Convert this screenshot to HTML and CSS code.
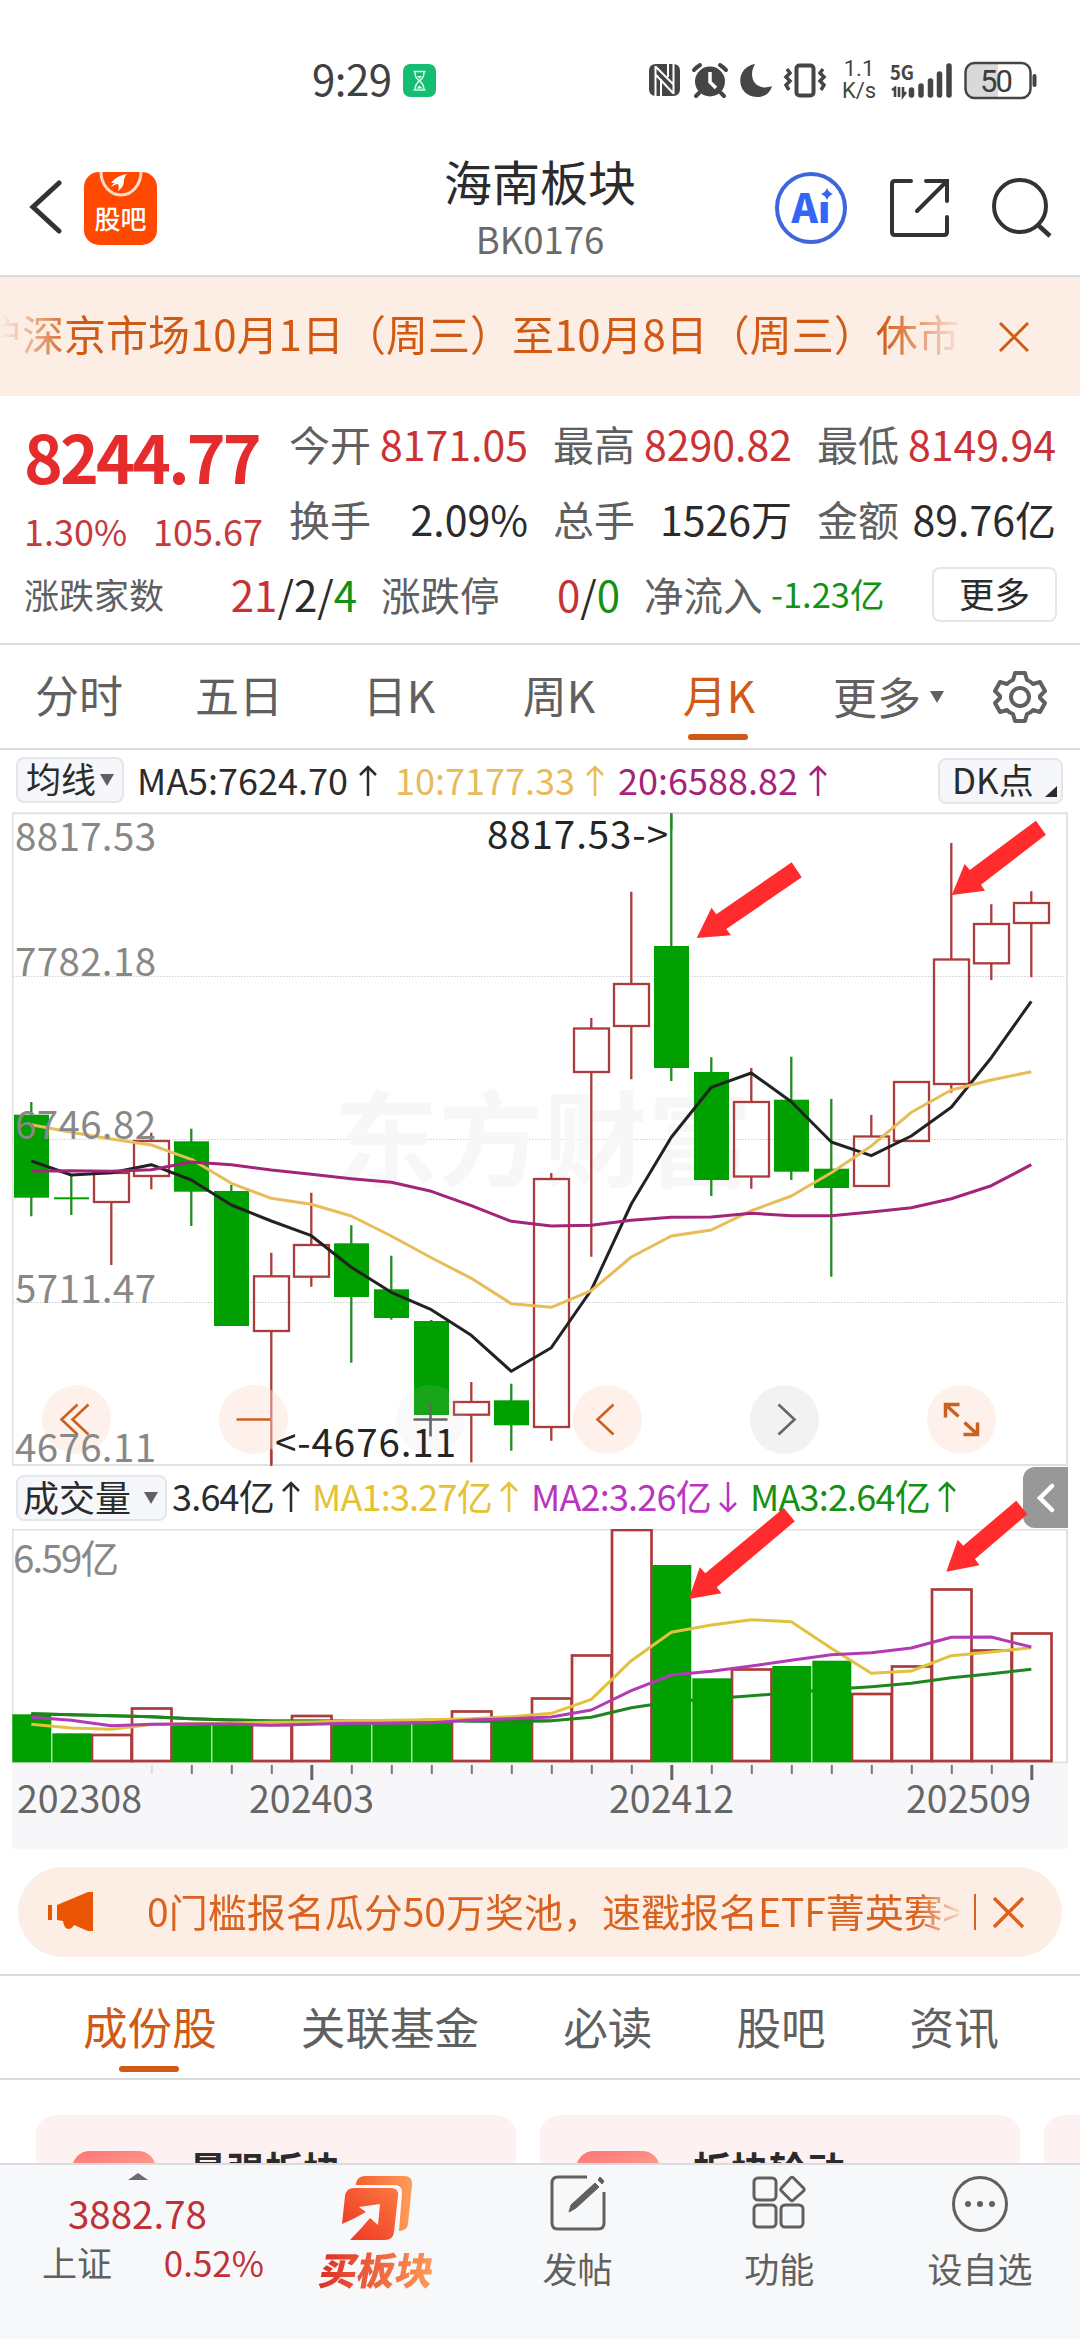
FILE: index.html
```html
<!DOCTYPE html>
<html lang="zh-CN">
<head>
    <meta charset="UTF-8">
    <meta name="viewport" content="width=device-width, initial-scale=1.0">
    <title>海南板块 BK0176</title>
    <link rel="stylesheet" href="styles.css">
</head>
<body>

    <div class="status-bar">
        <span class="clock">9:29</span>
        <svg class="timer-badge" width="33" height="33" viewBox="0 0 33 33">
            <rect width="33" height="33" rx="7" fill="#13bd71"/>
            <path d="M10.500 7.500h12M10.500 26h12M12 8c0 4.500 1 6 4.500 8.800C13 19.500 12 21.500 12 26M21 8c0 4.500-1 6-4.500 8.800C20 19.500 21 21.500 21 26" fill="none" stroke="#d8f8e8" stroke-width="1.500"/>
            <path d="M14 12h5l-2.500 2.500zM13.500 24.500l3-3 3 3z" fill="#fff"/>
        </svg>
        <div class="status-icons">
            <svg width="184" height="40" viewBox="644 60 184 40" fill="#454545">
                <path d="M655 64h17q7 0 7 7v18q0 7-7 7h-17q-7 0-7-7V71q0-7 7-7z"/>
                <path d="M654.500 96V66M672.500 94V64M655 67l17 17M655 75l17 18M660 79v17M667 64v13" stroke="#fff" stroke-width="2" fill="none"/>
                <circle cx="709" cy="81.500" r="15"/>
                <path d="M693 70q3-3 6-5M725 70q-3-3-6-5M698 93l-3 3M720 93l3 3" stroke="#454545" stroke-width="4" fill="none" stroke-linecap="round"/>
                <path d="M709 72v10l6 6" stroke="#fff" stroke-width="3.500" fill="none"/>
                <path d="M754 64c-20 3-20 32 2 33 8 0 13-4 15-11-16 6-25-8-17-22z"/>
                <rect x="795.500" y="65.500" width="17" height="30" rx="3" fill="none" stroke="#454545" stroke-width="4"/>
                <path d="M786 69l3 4-4 4 4 4-4 4 3 5M822 69l-3 4 4 4-4 4 4 4-3 5" fill="none" stroke="#454545" stroke-width="3.500"/>
            </svg>
            <div class="net-speed"><span>1.1</span><span>K/s</span></div>
            <svg width="65" height="40" viewBox="888 60 65 40" fill="#454545">
                <text x="889" y="80" font-size="20" font-weight="700" textLength="24" lengthAdjust="spacingAndGlyphs">5G</text>
                <path d="M891 90l3-2v9M898 87v10M902 87v9l3-4" fill="none" stroke="#454545" stroke-width="2.600"/>
                <path d="M910.500 90v5M920 86v9M929.500 81v14M938.500 74v21M948 66v29" stroke="#454545" stroke-width="5.500" stroke-linecap="round"/>
            </svg>
            <svg width="76" height="40" viewBox="962 60 76 40">
                <path d="M973 64h24v33h-24q-8 0-8-8V72q0-8 8-8z" fill="#d9d9d9"/>
                <rect x="964.500" y="63" width="65" height="35" rx="9" fill="none" stroke="#454545" stroke-width="2.500"/>
                <path d="M1033.500 76v9" stroke="#454545" stroke-width="4" stroke-linecap="round"/>
                <text class="battery-text" x="979" y="92" textLength="33">50</text>
            </svg>
        </div>
    </div>

    <header class="header">
        <svg class="back" width="34" height="56" viewBox="0 0 34 56"><path d="M31 4L5 28l26 24" fill="none" stroke="#333" stroke-width="5" stroke-linecap="round"/></svg>
        <div class="guba">
            <svg width="44" height="26" viewBox="0 0 44 26"><path d="M2 0a20 23 0 0 0 40 0" fill="none" stroke="#ffd9c9" stroke-width="3"/><path d="M12 11c4-5 9-8 16-9-2 2-3 4-3 7 0 4-2 7-6 10 1-3 1-5 0-7-2 0-4 1-7 3 1-2 2-3 4-4z" fill="#fff"/></svg>
            <span>股吧</span>
        </div>
        <div class="title">
            <div class="title-name">海南板块</div>
            <div class="title-code">BK0176</div>
        </div>
        <div class="header-icons">
            <div class="ai">Ai<svg class="ai-star" width="16" height="16" viewBox="0 0 16 16"><rect width="16" height="16" fill="#fff"/><path d="M8 2q1.500 4.500 6 6-4.500 1.500-6 6-1.500-4.500-6-6 4.500-1.500 6-6z" fill="#3565f6"/></svg></div>
            <svg width="60" height="60" viewBox="0 0 60 60" fill="none" stroke="#333" stroke-width="4" stroke-linecap="round"><path d="M22 3H6q-3 0-3 3v48q0 3 3 3h49q3 0 3-3V39M37 3h21v20M57 4L28 33"/></svg>
            <svg width="62" height="62" viewBox="0 0 62 62" fill="none" stroke="#333" stroke-width="4"><circle cx="29" cy="29" r="26"/><path d="M47 48l12 11" stroke-width="4.500"/></svg>
        </div>
    </header>

    <div class="notice">
        <div class="notice-text">沪深京市场10月1日（周三）至10月8日（周三）休市</div>
        <svg width="30" height="30" viewBox="0 0 30 30"><path d="M1 1l28 28M29 1L1 29" stroke="#d05a14" stroke-width="3"/></svg>
    </div>

    <section class="quote">
        <div class="quote-main">
            <div class="last-price">8244.77</div>
            <div class="change"><span>1.30%</span><span>105.67</span></div>
        </div>
        <div class="quote-grid">
            <div class="cell"><span>今开</span><b class="up">8171.05</b></div>
            <div class="cell"><span>最高</span><b class="up">8290.82</b></div>
            <div class="cell"><span>最低</span><b class="up">8149.94</b></div>
            <div class="cell"><span>换手</span><b>2.09%</b></div>
            <div class="cell"><span>总手</span><b>1526万</b></div>
            <div class="cell"><span>金额</span><b>89.76亿</b></div>
        </div>
        <div class="quote-extra">
            <span class="small">涨跌家数</span>
            <span class="count"><i class="up">21</i>/2/<i class="down">4</i></span>
            <span class="label">涨跌停</span>
            <span class="count"><i class="up">0</i>/<i class="down">0</i></span>
            <span class="label">净流入</span>
            <span class="flow">-1.23亿</span>
            <button class="more-btn">更多</button>
        </div>
    </section>

    <nav class="period-tabs">
        <span>分时</span>
        <span>五日</span>
        <span>日K</span>
        <span>周K</span>
        <span class="active">月K</span>
        <span class="more">更多<i class="tri"></i></span>
        <svg width="54" height="54" viewBox="-27 -27 54 54" fill="none" stroke="#606060" stroke-width="4" stroke-linejoin="round">
            <path d="M-5-24H5L7-17Q11-15.500 13-13L20-15 25-6 20-1V1L25 6 20 15 13 13Q11 15.500 7 17L5 24H-5L-7 17Q-11 15.500-13 13L-20 15-25 6-20 1V-1L-25-6-20-15-13-13Q-11-15.500-7-17Z"/>
            <circle r="9"/>
        </svg>
    </nav>

    <section class="chart">
        <div class="legend ma-legend">
            <button class="pick">均线<i class="tri"></i></button>
            <span class="ma5">MA5:7624.70<svg class="arr" viewBox="0 0 18 32"><path d="M9 31V2M1 10l8-8 8 8"/></svg></span>
            <span class="ma10">10:7177.33<svg class="arr" viewBox="0 0 18 32"><path d="M9 31V2M1 10l8-8 8 8"/></svg></span>
            <span class="ma20">20:6588.82<svg class="arr" viewBox="0 0 18 32"><path d="M9 31V2M1 10l8-8 8 8"/></svg></span>
            <button class="pick dk">DK点<i class="corner"></i></button>
        </div>

        <svg class="price" id="priceChart" width="1056" height="654" viewBox="12 812 1056 654"></svg>

        <div class="legend vol-legend">
            <button class="pick">成交量<i class="tri"></i></button>
            <span class="v0">3.64亿<svg class="arr" viewBox="0 0 18 32"><path d="M9 31V2M1 10l8-8 8 8"/></svg></span>
            <span class="v1">MA1:3.27亿<svg class="arr" viewBox="0 0 18 32"><path d="M9 31V2M1 10l8-8 8 8"/></svg></span>
            <span class="v2">MA2:3.26亿<svg class="arr" viewBox="0 0 18 32"><path d="M9 1v29M1 22l8 8 8-8"/></svg></span>
            <span class="v3">MA3:2.64亿<svg class="arr" viewBox="0 0 18 32"><path d="M9 31V2M1 10l8-8 8 8"/></svg></span>
            <div class="drawer"><svg width="18" height="30" viewBox="0 0 18 30"><path d="M15 3L3 15l12 12" fill="none" stroke="#fff" stroke-width="4.500" stroke-linecap="round"/></svg></div>
        </div>

        <svg class="volume" id="volumeChart" width="1056" height="320" viewBox="12 1529 1056 320"></svg>

        <!-- hand drawn marks over both charts -->
        <svg class="marks" width="1080" height="1100" viewBox="0 750 1080 1100" fill="#ff2b2c">
            <path d="M696.700 938L711.500 907.700 716.300 914.300 791.700 862.300 801.700 877.300 726.300 929 731 935.300Z"/>
            <path d="M951.800 895L964.600 864 969.800 870 1035.900 820.700 1045.900 834.700 981 884.700 985 890.700Z"/>
            <path d="M688.800 1599L699.800 1567.300 705.300 1573.300 783.800 1508 794.800 1521.300 716.700 1587.300 721.500 1593.300Z"/>
            <path d="M946.300 1571.700L957.700 1539.700 963.200 1545.700 1016.200 1500.700 1027.300 1514.300 975 1559 979.400 1565.300Z"/>
        </svg>
    </section>

    <div class="promo">
        <svg width="48" height="40" viewBox="0 0 48 40" fill="#ea5504"><path d="M1 13h4v15H1zM10 13L41 0h5v39h-5l-14-6q-2 4-6 4-4-1-5-8l-6-1z"/></svg>
        <div class="promo-text">0门槛报名瓜分50万奖池，速戳报名ETF菁英赛&gt;&gt;</div>
        <i class="promo-line"></i>
        <svg width="33" height="33" viewBox="0 0 33 33"><path d="M2 2l29 29M31 2L2 31" stroke="#d9621f" stroke-width="3.500"/></svg>
    </div>

    <nav class="content-tabs">
        <span class="active">成份股</span>
        <span>关联基金</span>
        <span>必读</span>
        <span>股吧</span>
        <span>资讯</span>
    </nav>

    <div class="cards">
        <div class="card"><i class="card-icon"></i><b>最强板块</b></div>
        <div class="card"><i class="card-icon"></i><b>板块轮动</b></div>
        <div class="card"></div>
    </div>

    <footer class="bottom-bar">
        <div class="index">
            <i class="up-tri"></i>
            <div class="index-value">3882.78</div>
            <div class="index-row"><span>上证</span><b>0.52%</b></div>
        </div>
        <div class="item buy">
            <svg width="72" height="66" viewBox="0 0 72 66">
                <defs>
                    <linearGradient id="buyFront" x1="0" y1="1" x2="1" y2="0"><stop offset="0" stop-color="#ee3224"/><stop offset="1" stop-color="#fb7a40"/></linearGradient>
                    <linearGradient id="buyBack" x1="0" y1="0" x2="1" y2="0"><stop offset="0" stop-color="#f66030"/><stop offset="1" stop-color="#ff9c5a"/></linearGradient>
                </defs>
                <path d="M15 8Q17 1 24 1h39q9 0 8 9l-4 39q-1 7-9 7l3-37q1-9-8-9H15z" fill="url(#buyBack)"/>
                <path d="M4 21q1-8 9-8h37q8 0 7 8l-4 36q-1 8-9 8H9q9-9 20-22l8 7 2-21-21 3 7 5Q13 44 1 49z" fill="url(#buyFront)"/>
            </svg>
            <span>买板块</span>
        </div>
        <div class="item post">
            <svg width="56" height="56" viewBox="0 0 56 56" fill="none" stroke="#606060" stroke-width="3"><path d="M37 2H8Q2 2 2 8v40q0 6 6 6h40q6 0 6-6V17"/><path d="M19 37l2-7L45 8l4 4-23 21zM48 5l2-3 4 4-2 3z" fill="#606060" stroke-width="1"/></svg>
            <span>发帖</span>
        </div>
        <div class="item func">
            <svg width="54" height="54" viewBox="0 0 54 54" fill="none" stroke="#606060" stroke-width="3"><rect x="2" y="3" width="22" height="22" rx="4"/><rect x="2" y="30" width="22" height="22" rx="4"/><rect x="29" y="30" width="22" height="22" rx="4"/><path d="M38.500 3q1.500-1.500 3 0l10 10q1.500 1.500 0 3l-10 9q-1.500 1.500-3 0l-9-9q-1.500-1.500 0-3z"/></svg>
            <span>功能</span>
        </div>
        <div class="item set">
            <svg width="58" height="58" viewBox="0 0 58 58"><circle cx="29" cy="29" r="26.500" fill="none" stroke="#606060" stroke-width="3"/><g fill="#606060"><circle cx="17" cy="29" r="3"/><circle cx="29" cy="29" r="3"/><circle cx="41" cy="29" r="3"/></g></svg>
            <span>设自选</span>
        </div>
    </footer>

    <script>
        // one row per month: direction, body top, body bottom, high, low, volume top
        const months = [
            ["g", 1114.7, 1197.7, 1102, 1216.3, 1714.3],
            ["g", 1197.3, 1199.3, 1175.5, 1215, 1733.3],
            ["r", 1173, 1202, 1173, 1265, 1735],
            ["r", 1141, 1176, 1132.7, 1189.3, 1708.5],
            ["g", 1141.3, 1191.7, 1128.7, 1226, 1724],
            ["g", 1191, 1326, 1185, 1326, 1724],
            ["r", 1276.3, 1331, 1252.7, 1466, 1725],
            ["r", 1245, 1276.7, 1192.7, 1286.7, 1716],
            ["g", 1243.3, 1297, 1225.3, 1362.7, 1722.5],
            ["g", 1289.3, 1318, 1255.7, 1319.7, 1723.5],
            ["g", 1321, 1415, 1320, 1415, 1722.5],
            ["r", 1402, 1414.7, 1382, 1462.3, 1711.5],
            ["g", 1400.3, 1425.3, 1383.7, 1450.7, 1716],
            ["r", 1179, 1427, 1173, 1440.7, 1698.5],
            ["r", 1028.5, 1072, 1018, 1256.7, 1655.5],
            ["r", 984, 1026, 891.7, 1079.3, 1530],
            ["g", 946, 1068, 813, 1081, 1565],
            ["g", 1072, 1180, 1057.3, 1196, 1678.3],
            ["r", 1102, 1176.5, 1068, 1188.7, 1669.5],
            ["g", 1099.7, 1171.7, 1056.7, 1180, 1666],
            ["g", 1168.7, 1188, 1099, 1276.7, 1660.7],
            ["r", 1136.5, 1186, 1115, 1186, 1694],
            ["r", 1082, 1141, 1082, 1141, 1666.5],
            ["r", 959.5, 1084, 843, 1092.7, 1589.5],
            ["r", 924, 963.3, 904.3, 980, 1650.5],
            ["r", 903, 923, 891.3, 977.3, 1633.5]
        ];

        const ma5 = [1161, 1175, 1172.7, 1164.7, 1180, 1205, 1221, 1235.7, 1267.3, 1292.3, 1309.7, 1335.3, 1371.3, 1347.7, 1290, 1204, 1137.3, 1087.3, 1073, 1101.7, 1142, 1155.7, 1136, 1107.3, 1057.7, 1001.3];
        const ma10 = [1124.7, 1132.3, 1139, 1145, 1159.3, 1183.3, 1198.3, 1204.3, 1216, 1236, 1257.7, 1278.3, 1303.7, 1307.3, 1290.7, 1257, 1236, 1230, 1210.7, 1196, 1172.7, 1146, 1112.3, 1090, 1080, 1071.7];
        const ma20 = [1171, 1170.7, 1171.3, 1169.7, 1162, 1164.7, 1170, 1174.3, 1178.7, 1182.3, 1191.3, 1205.7, 1221.3, 1226, 1225.3, 1220.3, 1217.3, 1217, 1213.3, 1215.7, 1215.7, 1212, 1207.7, 1198.7, 1185.7, 1164.7];
        const vol1 = [1724.3, 1728, 1729.3, 1724.5, 1723.7, 1723, 1722.3, 1722, 1721, 1720.3, 1719.7, 1718.7, 1716.7, 1713.3, 1699.3, 1660.7, 1632.3, 1625, 1619.7, 1621.7, 1648.3, 1673.3, 1671, 1655.7, 1652, 1647.7];
        const vol2 = [1717.3, 1720.3, 1725.7, 1724.3, 1724, 1724, 1725.3, 1724.3, 1723.3, 1723.3, 1722.7, 1720, 1718.7, 1717, 1710, 1690.7, 1675, 1671.3, 1666, 1660.3, 1654.7, 1652.7, 1648, 1637.3, 1637, 1647];
        const vol3 = [1713.7, 1714.7, 1715.7, 1716.7, 1718.7, 1720, 1721, 1721, 1721.3, 1721, 1720.3, 1721, 1721.3, 1720.7, 1717.3, 1707.7, 1701.7, 1698.7, 1695.7, 1692.7, 1689.3, 1686.7, 1683.3, 1677.7, 1673.7, 1669.3];

        const x = i => 31.3 + i * 40;
        const line = (cls, ys) => `<polyline class="line ${cls}" points="${ys.map((y, i) => x(i) + "," + y).join(" ")}"/>`;

        // price chart
        let price = "";
        [976.5, 1139.5, 1302.5].forEach(y => price += `<path class="grid" d="M13 ${y}H1067"/>`);
        price += `<text class="watermark" x="334" y="1179" textLength="418">东方财富</text>`;
        months.forEach(([dir, top, bottom, high, low], i) => {
            if (dir === "g") {
                price += `<path class="wick-g" d="M${x(i)} ${high}V${low}"/>`;
                price += `<rect class="body-g" x="${x(i) - 17.3}" y="${top}" width="35" height="${bottom - top}"/>`;
            } else {
                price += `<path class="wick-r" d="M${x(i)} ${high}V${top}M${x(i)} ${bottom}V${low}"/>`;
                price += `<rect class="body-r" x="${x(i) - 17.3}" y="${top}" width="35" height="${bottom - top}"/>`;
            }
        });
        price += line("black", ma5) + line("gold", ma10) + line("purple", ma20);

        const discs = [
            [76.5, "on", "M1-15L-15 0L1 15M12-15L-4 0L12 15"],
            [253.5, "on", "M-17 0H17"],
            [430.5, "off", "M-17 0H17M0-17V17"],
            [607.5, "on", "M6-15L-10 0L6 15"],
            [784.5, "off", "M-6-15L10 0L-6 15"],
            [961.5, "on thick", "M-16-2V-15H-2M-15-14L-3-3M16 3V15H2M15 14L3 3"]
        ];
        discs.forEach(([cx, cls, d]) => price += `<g class="disc ${cls}" transform="translate(${cx} 1419.500)"><circle r="34.500"/><path d="${d}"/></g>`);

        [["8817.53", 851], ["7782.18", 976], ["6746.82", 1139], ["5711.47", 1303], ["4676.11", 1462]].forEach(([t, y]) =>
            price += `<text class="scale" x="15" y="${y}" textLength="141">${t}</text>`);
        price += `<text class="peak" x="487" y="849" textLength="181">8817.53-&gt;</text>`;
        price += `<text class="peak" x="275" y="1457" textLength="181">&lt;-4676.11</text>`;
        price += `<path class="frame" d="M12.500 813V1465M12 813.200H1067V1465H12"/><path class="wick-g" d="M${x(16)} 813V830"/><path class="wick-r" d="M${x(6)} 1450V1466"/>`;
        document.getElementById("priceChart").innerHTML = price;

        // volume chart with its time axis
        let volume = `<path class="frame" d="M12.500 1529V1762M12 1529.500H1067V1762.500H12"/><rect class="axis" x="12" y="1764" width="1056" height="85"/>`;
        months.forEach((m, i) => {
            if (m[0] === "r") {
                volume += `<rect class="body-r vol" x="${x(i) - 19.3}" y="${m[5]}" width="39.500" height="${1761 - m[5]}"/>`;
            }
        });
        volume += line("dark-green", vol3);
        months.forEach((m, i) => {
            if (m[0] === "g") {
                volume += `<rect class="body-g" x="${x(i) - 19}" y="${m[5]}" width="39" height="${1762.3 - m[5]}"/>`;
            }
        });
        volume += `<polyline class="line dark-green" points="${vol3.slice(0, 14).map((y, i) => x(i) + "," + y).join(" ")}"/>`;
        volume += line("yellow", vol1) + line("violet", vol2);
        for (let i = 3; i < 26; i++) {
            const major = i === 7 || i === 16 || i === 25;
            volume += `<path class="tick${major ? " major" : ""}${i === 3 ? " faint" : ""}" d="M${x(i) + 0.5} 1765V${major ? 1780 : 1774}"/>`;
        }
        volume += `<text class="scale" x="13" y="1573" textLength="106">6.59亿</text>`;
        [["202308", 17], ["202403", 249], ["202412", 609], ["202509", 906]].forEach(([t, tx]) =>
            volume += `<text class="month" x="${tx}" y="1813" textLength="125">${t}</text>`);
        document.getElementById("volumeChart").innerHTML = volume;
    </script>

</body>
</html>
```
FILE: styles.css
```css
* { box-sizing: border-box; }
body {
    margin: 0; width: 1080px; height: 2340px; overflow: hidden; background: #fff; color: #2b2b2b;
    font-family: "Noto Sans CJK SC", "Noto Sans", sans-serif; line-height: 1;
    display: flex; flex-direction: column;
}
body > * { flex: none; }
svg { display: block; flex: none; }
button { font: inherit; color: inherit; padding: 0; white-space: nowrap; }
i, b { font-style: normal; font-weight: normal; }
span, b { white-space: nowrap; }
.up { color: #c93235; }
.down { color: #149114; }

/* status bar */
.status-bar { height: 122px; padding: 39px 41px 1px 312px; display: flex; align-items: center; }
.clock { font-size: 42px; line-height: 60px; color: #404040; width: 91px; margin-top: -4px; letter-spacing: -0.5px; }
.status-icons { display: flex; align-items: center; margin-left: auto; }
.net-speed { width: 56px; display: flex; flex-direction: column; align-items: center; font: 22px/22px Roboto, sans-serif; color: #454545; margin: -1px 2px 0; }
.status-icons svg:last-child { margin-left: 9px; }
.battery-text { font: 31px Roboto, sans-serif; fill: #3c3c3c; }

/* title row */
.header { height: 153px; padding: 0 27px 0 28px; display: flex; align-items: center; position: relative; }
.back { margin-top: 17px; }
.guba { width: 73px; height: 73px; margin: 19px 0 0 22px; border-radius: 15px; background: #ff4800; display: flex; flex-direction: column; align-items: center; color: #fff; }
.guba span { font-size: 26px; line-height: 34px; font-weight: 500; margin-top: 3px; }
.title { position: absolute; left: 0; right: 0; top: 23px; text-align: center; }
.title-name { font-size: 48px; line-height: 70px; }
.title-code { font-size: 36.500px; line-height: 50px; color: #6a6a6a; margin-top: -1px; }
.header-icons { margin: 18px 0 0 auto; display: flex; align-items: center; gap: 42px; }
.ai { width: 72px; height: 72px; border: 4px solid #3d66dd; border-radius: 50%; color: #3565f6; font: 900 40px/60px "Noto Sans CJK SC", sans-serif; text-align: center; position: relative; transform: none; }
.ai-star { position: absolute; right: 8px; top: 10px; }

.notice { height: 121px; border-top: 2px solid #dcdcdc; background: #fceee5; display: flex; align-items: center; color: #d05a14; }
.notice-text {
    width: 958px; margin-right: 41px; overflow: hidden; white-space: nowrap; font-size: 42px; line-height: 60px; text-indent: -20px; margin-top: -8px;
    -webkit-mask-image: linear-gradient(to right, transparent 0, #000 75px, #000 880px, transparent 965px);
    mask-image: linear-gradient(to right, transparent 0, #000 75px, #000 880px, transparent 965px);
}

/* quote */
.quote { height: 249px; border-bottom: 2px solid #d9dcdd; padding: 12px 24px 0; display: grid; grid-template-columns: 265px 1fr; grid-template-rows: 150px 75px; }
.last-price { font-size: 66px; font-weight: 700; letter-spacing: -2.900px; color: #e52b2b; margin-top: 14px; height: 90px; white-space: nowrap; }
.change { display: flex; justify-content: space-between; width: 239px; font-size: 36px; color: #c53a3a; }
.quote-grid { display: grid; grid-template-columns: repeat(3, 239px); column-gap: 25px; grid-auto-rows: 75px; font-size: 41px; }
.cell { display: flex; justify-content: space-between; align-items: center; padding-bottom: 4px; }
.cell span, .label { color: #606060; }
.quote-extra { grid-column: 1 / 3; display: flex; align-items: center; }
.quote-extra > span { padding-bottom: 4px; }
.small { font-size: 35px; color: #606060; width: 150px; }
.count { font-size: 42px; width: 183px; text-align: right; }
.label { font-size: 39.500px; margin-left: 24px; width: 124px; }
.label + .count { width: 115px; }
.label + .flow { margin-left: 3px; }
.flow { font-size: 34.500px; color: #149114; }
.more-btn { width: 125px; height: 55px; margin: -2px -1px 0 auto; background: #fff; border: 2px solid #e6e6e6; border-radius: 8px; font-size: 35.500px; line-height: 46px; padding-bottom: 3px; }

.period-tabs { height: 105px; border-bottom: 2px solid #d9dcdd; display: flex; align-items: center; font-size: 44px; color: #606060; }
.period-tabs > span { width: 160px; text-align: center; height: 103px; line-height: 99px; position: relative; left: -1px; }
.period-tabs .more { width: 193px; padding-left: 34px; display: flex; align-items: center; }
.tri { display: inline-block; border: 7px solid transparent; border-top: 12px solid #606060; border-bottom: 0; margin-left: 9px; flex: none; }
.active { color: #d05a14; }
.active::after { content: ""; position: absolute; left: 50%; margin-left: -31px; bottom: 8px; width: 60px; height: 6px; border-radius: 3px; background: #d05a14; }

/* charts */
.chart { position: relative; height: 1099px; }
.legend { display: flex; align-items: center; position: relative; font-size: 36px; }
.ma-legend { height: 62px; padding: 0 17px 0 16px; }
.legend > span { display: flex; align-items: center; height: 54px; margin-top: -5px; }
.arr { width: 18px; height: 32px; fill: none; stroke: currentColor; stroke-width: 2.500; margin: 4px 0 0 11px; }
.pick { height: 46px; border: 2px solid #e4e6ea; border-radius: 8px; background: #f6f7fa; display: flex; align-items: center; font-size: 35px; line-height: 36px; padding: 0 8px 4px; }
.ma-legend .pick { width: 108px; margin: -2px 13px 0 0; }
.ma-legend .pick .tri { margin: 4px 0 0 4px; }
.ma5 { color: #2b2b2b; width: 258px; }
.ma10 { color: #e7bb5c; width: 223px; }
.ma20 { color: #a32478; }
.ma-legend .dk { width: 125px; margin: 0 0 0 auto; position: relative; padding-left: 12px; }
.corner { position: absolute; right: 4px; bottom: 5px; border-left: 12px solid transparent; border-bottom: 11px solid #2b2b2b; }
.price, .volume { margin-left: 12px; }
.vol-legend { height: 63px; padding-left: 16px; }
.vol-legend .pick { width: 151px; margin-right: 5px; font-size: 36px; padding-left: 5px; }
.vol-legend .tri { margin: 4px 0 0 13px; }
.vol-legend > span { letter-spacing: -0.8px; }
.vol-legend .arr { margin-left: 8px; }
.v0 { width: 140px; }
.v1 { color: #e6c232; width: 219px; }
.v2 { color: #b934c0; width: 219px; }
.v3 { color: #149114; }
.drawer { position: absolute; right: 12px; top: 1px; width: 45px; height: 61px; border-radius: 12px 0 0 12px; background: #989898; display: flex; align-items: center; padding-left: 14px; }
.marks { position: absolute; left: 0; top: 0; }

.frame { fill: none; stroke: #e1e1e3; stroke-width: 2; }
.grid { stroke: #cfcfcf; stroke-width: 1; stroke-dasharray: 1.500 1.500; }
.watermark { font-size: 104px; font-weight: 700; fill: #f7f7f7; }
.scale { font-size: 38.500px; fill: #888; }
.peak { font-size: 38.500px; fill: #252525; }
.month { font-size: 37.500px; fill: #666; }
.body-g { fill: #00a000; }
.body-r { fill: none; stroke: #ac3b3b; stroke-width: 2.300; }
.vol { stroke-width: 2.700; }
.wick-g { stroke: #1f8c1f; stroke-width: 2.300; }
.wick-r { stroke: #ac3b3b; stroke-width: 2.300; }
.line { fill: none; stroke-width: 3; stroke-linejoin: round; }
.black { stroke: #222; }
.gold { stroke: #e8bc58; }
.purple { stroke: #a32478; }
.yellow { stroke: #e2c23c; }
.violet { stroke: #b23ab4; }
.dark-green { stroke: #1f861f; }
.disc path { fill: none; stroke-width: 2.600; }
.disc.thick path { stroke-width: 3.500; }
.on circle { fill: #fdded0; fill-opacity: 0.45; }
.on path { stroke: #cc601e; }
.off circle { fill: #ccc; fill-opacity: 0.25; }
.off:nth-of-type(3) circle { fill-opacity: 0.12; }
.off path { stroke: #666; }
.axis { fill: #f7f7fa; }
.tick { stroke: #777; stroke-width: 2; }
.tick.major { stroke: #666; stroke-width: 3; }
.tick.faint { stroke: #ddd; }

/* promo */
.promo { height: 90px; margin: 18px 18px 0 18px; border-radius: 45px; background: #fceee5; padding-left: 29px; display: flex; align-items: center; color: #d9621f; }
.promo-text {
    width: 812px; margin: -5px 0 0 52px; overflow: hidden; white-space: nowrap; font-size: 39px; line-height: 56px;
    -webkit-mask-image: linear-gradient(to right, #000 770px, transparent 820px);
    mask-image: linear-gradient(to right, #000 770px, transparent 820px);
}
.promo-line { width: 1.500px; height: 36px; background: #d9621f; margin: 0 16px 0 15px; }

.content-tabs { height: 106px; margin-top: 17px; border-top: 2px solid #d9dcdd; border-bottom: 2px solid #d9dcdd; padding-left: 83px; display: flex; gap: 84px; font-size: 44.600px; line-height: 99px; color: #606060; }
.content-tabs span { position: relative; }
.content-tabs .active::after { bottom: 6px; }

.cards { height: 83px; padding: 35px 0 0 36px; display: flex; gap: 24px; overflow: hidden; }
.card { width: 480px; flex: none; height: 200px; border-radius: 20px; background: #fdf1f1; padding: 36px; display: flex; }
.card-icon { width: 84px; height: 84px; border-radius: 18px; background: linear-gradient(160deg, #fd7575, #ff9f90 45%, #fd6464); }
.card b { font-size: 38px; font-weight: 700; margin: -2px 0 0 33px; height: 40px; }

/* bottom bar */
.bottom-bar { height: 176px; border-top: 2px solid #d8dbdf; background: #f7f8fa; display: flex; position: relative; }
.index { width: 277px; padding: 8px 0 0 42px; color: #c03136; }
.up-tri { display: block; width: 20px; border: 10px solid transparent; border-top: 0; border-bottom: 7px solid #6a6a70; margin-left: 86px; }
.index-value { font-size: 38.500px; margin: 13px 0 0 26px; }
.index-row { display: flex; justify-content: space-between; width: 222px; margin-top: 12px; font-size: 35px; }
.index-row span { color: #606060; }
.item { width: 202px; display: flex; flex-direction: column; align-items: center; font-size: 35px; color: #606060; }
.item span { position: absolute; top: 85px; }
.item svg { margin-top: 10px; }
.buy { width: 200px; }
.buy span { top: 83px; font-size: 38px; font-weight: 900; transform: skewX(-10deg); background: linear-gradient(90deg, #dc3028, #ff9a55); -webkit-background-clip: text; background-clip: text; color: transparent; line-height: 42px; }
.set { width: 200px; }
```
